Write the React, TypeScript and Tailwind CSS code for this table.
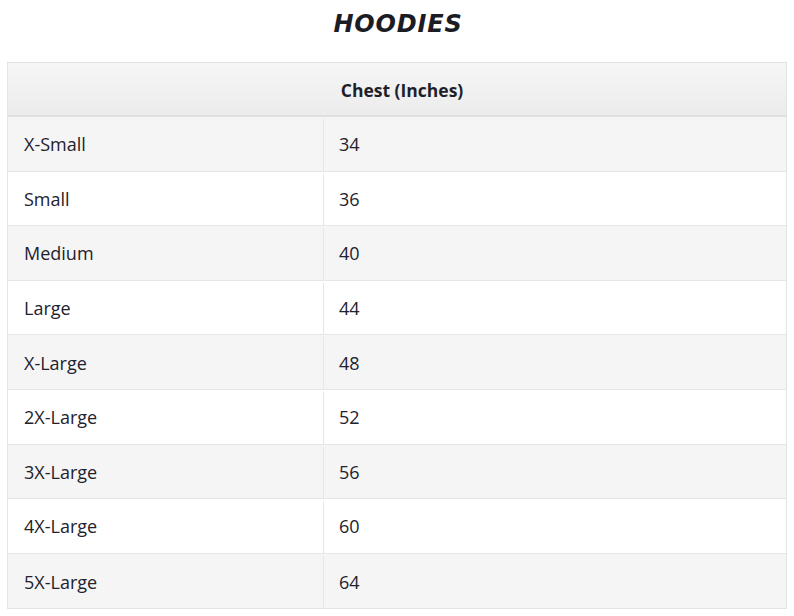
import React from 'react';

const rows: [string, string][] = [
  ['X-Small', '34'],
  ['Small', '36'],
  ['Medium', '40'],
  ['Large', '44'],
  ['X-Large', '48'],
  ['2X-Large', '52'],
  ['3X-Large', '56'],
  ['4X-Large', '60'],
  ['5X-Large', '64'],
];

export default function App() {
  return (
    <div className="w-[794px] h-[616px] bg-white overflow-hidden" style={{ fontFamily: '"Open Sans", "Noto Sans", sans-serif' }}>
      {/* Title */}
      <div className="h-[62px] flex justify-center pt-[7px]">
        <h1
          className="text-[24px] font-bold italic tracking-[0.8px] text-[#1c1c24] leading-[34px] pl-[2px]"
          style={{ fontFamily: '"DejaVu Sans", sans-serif' }}
        >
          HOODIES
        </h1>
      </div>

      {/* Table */}
      <div className="mx-[7px] w-[780px] border border-[#e3e3e3]">
        <div className="h-[54px] flex items-center justify-center bg-gradient-to-b from-[#f6f6f6] to-[#ececec] border-b-2 border-[#e0e0e0] pl-[10px] pt-[3px]">
          <span className="text-[17.5px] font-bold text-[#1f1f2a]">Chest (Inches)</span>
        </div>
        {rows.map(([size, chest], i) => (
          <div
            key={size}
            className={`h-[54.6px] flex pt-[2px] ${i % 2 === 0 ? 'bg-[#f5f5f5]' : 'bg-white'} ${i < rows.length - 1 ? 'border-b border-[#e6e6e6]' : ''}`}
          >
            <div className="w-[316px] flex items-center pl-[16px] border-r border-[#e6e6e6] text-[18px] text-[#22222e]">
              {size}
            </div>
            <div className="flex-1 flex items-center pl-[15px] text-[18px] text-[#22222e]">{chest}</div>
          </div>
        ))}
      </div>
    </div>
  );
}
